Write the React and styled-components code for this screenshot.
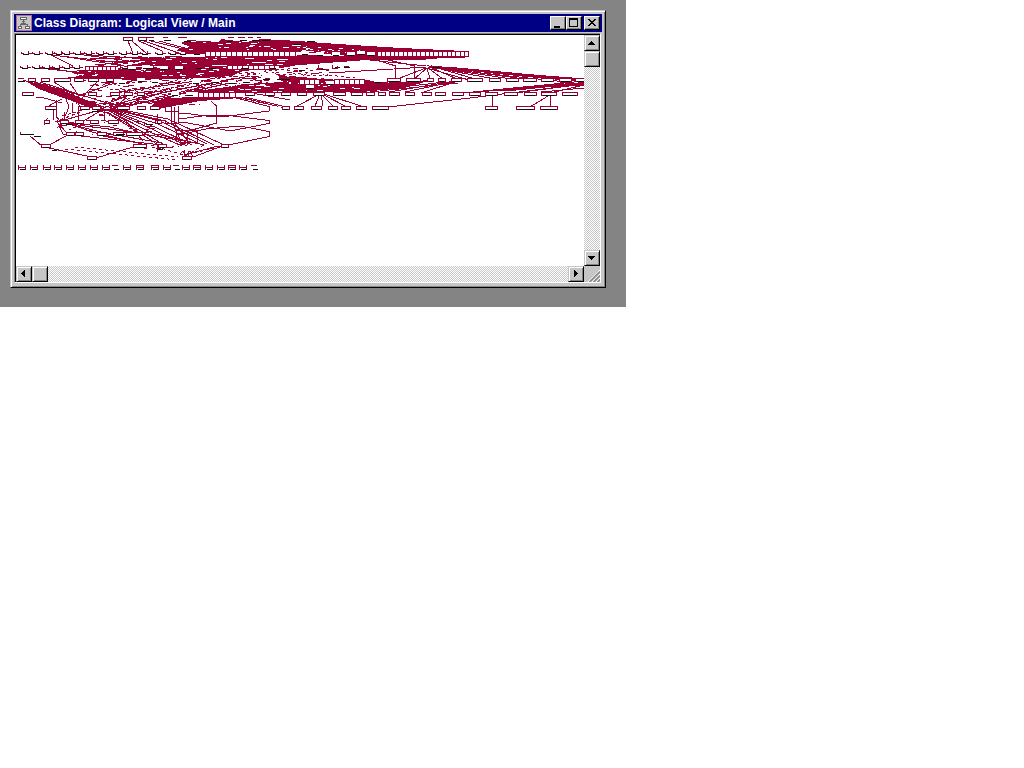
import React from "react";
import styled, { createGlobalStyle } from "styled-components";

const Global = createGlobalStyle`
  body { margin: 0; background: #fff; font-family: "Liberation Sans", Arial, sans-serif; }
`;
const Desktop = styled.main`
  box-sizing: border-box; width: 626px; height: 307px; padding: 10px;
  background: #848484;
`;
const Frame = styled.section`
  box-sizing: border-box; width: 596px; height: 278px; padding: 3px;
  background: #c6c6c6; border: 1px solid; border-color: #c6c6c6 #000 #000 #c6c6c6;
  box-shadow: inset 1px 1px #fff, inset -1px -1px #848484;
`;
const TitleBar = styled.header`
  box-sizing: border-box; display: flex; align-items: center;
  width: 588px; height: 18px; padding: 0 2px; background: #000084;
`;
const Title = styled.h1`
  flex: 1; margin: 0 0 0 2px; color: #fff; font-size: 12px; line-height: 17px;
  font-weight: 700; letter-spacing: 0.03px; white-space: nowrap;
`;
const Buttons = styled.div`display: flex;`;
const Button = styled.button`
  box-sizing: border-box; display: block; padding: 0;
  width: 16px; height: ${(p) => p.$h || 16}px; margin-left: ${(p) => p.$gap || 0}px;
  background: #c6c6c6; border: 1px solid; border-radius: 0;
  border-color: ${(p) => (p.$scroll ? "#c6c6c6 #000 #000 #c6c6c6" : "#fff #000 #000 #fff")};
  box-shadow: ${(p) => (p.$scroll ? "inset 1px 1px #fff, inset -1px -1px #848484" : "inset -1px -1px #848484")};
  svg { display: block; }
`;
const Client = styled.div`
  box-sizing: border-box; display: grid; width: 587px; height: 250px; margin-top: 1px;
  grid-template-columns: 568px 16px; grid-template-rows: 231px 16px;
  border: 1px solid; border-color: #848484 #fff #fff #848484;
  padding: 1px 0 0 1px; box-shadow: inset 1px 1px #000;
  svg { display: block; }
`;
const Track = styled.div`
  display: flex; flex-direction: ${(p) => (p.$vertical ? "column" : "row")};
  background: repeating-conic-gradient(#c6c6c6 0 25%, #fff 0 50%) 0 0 / 2px 2px;
`;
const Space = styled.div`flex: 1;`;
const Corner = styled.div`background: #c6c6c6;`;

const RED = "#990033";
const INK = "#111";

const arrows = {
  up: "M6 5h1v1H6zM5 6h3v1H5zM4 7h5v1H4zM3 8h7v1H3z",
  down: "M3 5h7v1H3zM4 6h5v1H4zM5 7h3v1H5zM6 8h1v1H6z",
  left: "M4 6h1v1H4zM5 5h1v3H5zM6 4h1v5H6zM7 3h1v7H7z",
  right: "M5 3h1v7H5zM6 4h1v5H6zM7 5h1v3H7zM8 6h1v1H8z",
};
const Arrow = ({ to }) => (
  <svg width="14" height="14" shapeRendering="crispEdges"><path d={arrows[to]} /></svg>
);
const captions = {
  Minimize: "M3 9h6v2H3z",
  Maximize: "M2 1h9v2H2zM2 3h1v7H2zM10 3h1v7h-1zM2 9h9v1H2z",
  Close: "M3 2h2v1H3zM9 2h2v1H9zM4 3h2v1H4zM8 3h2v1H8zM5 4h4v1H5zM6 5h2v1H6zM5 6h4v1H5zM4 7h2v1H4zM8 7h2v1H8zM3 8h2v1H3zM9 8h2v1H9z",
};
const Caption = ({ kind, gap }) => (
  <Button $h={14} $gap={gap} aria-label={kind}>
    <svg width="14" height="12" shapeRendering="crispEdges"><path d={captions[kind]} /></svg>
  </Button>
);
const DiagramIcon = () => (
  <svg width="16" height="16" shapeRendering="crispEdges">
    <path fill="#c6c6c6" stroke="#b06c91" d="M.5.5h15v15H.5z" />
    <path fill="#fff" stroke="#666" d="M4.5 2.5h6v2h-6zM2.5 11.5h3v2h-3zM9.5 11.5h4v2h-4z" />
    <path fill="none" stroke="#666" d="M7.5 5v4M4.5 11V9.5h7V11M5 8.5h5M6 6.5h3" />
  </svg>
);

/* Class nodes as [x, y, width] */
const nodes = [
  [123, 37, 9], [138, 37, 8],
  [28, 78, 7], [41, 78, 8], [54, 78, 16], [74, 78, 9], [88, 78, 10], [106, 78, 7],
  [22, 92, 11], [88, 92, 8], [110, 92, 9], [124, 92, 8], [137, 92, 7],
  [45, 106, 11], [80, 106, 9], [92, 106, 8], [117, 106, 12], [137, 106, 8], [150, 106, 9],
  [44, 120, 5], [60, 120, 8], [75, 120, 8], [90, 120, 8], [108, 120, 10], [155, 120, 6],
  [66, 132, 8], [75, 132, 8], [97, 132, 9], [113, 132, 10], [126, 132, 16],
  [41, 144, 9], [87, 156, 9], [182, 156, 9], [133, 144, 13], [158, 144, 8], [221, 144, 7],
  [282, 106, 7], [294, 106, 9], [311, 106, 10], [328, 106, 9], [341, 106, 9], [356, 106, 10], [372, 106, 16],
  [485, 106, 12], [516, 106, 18], [540, 106, 17],
  [245, 92, 9], [265, 92, 9], [281, 92, 9], [297, 92, 9], [313, 92, 11], [333, 92, 12], [351, 92, 11], [366, 92, 8], [378, 92, 7], [389, 92, 10], [405, 92, 9], [422, 92, 9], [435, 92, 10], [452, 92, 11], [469, 92, 11], [485, 92, 12], [504, 92, 13], [524, 92, 12], [541, 92, 15], [562, 92, 15],
  [387, 78, 13], [406, 78, 14], [427, 78, 6], [438, 78, 7], [451, 78, 10], [467, 78, 15], [489, 78, 11], [506, 78, 12], [523, 78, 13], [541, 78, 12], [559, 78, 12], [575, 78, 10],
];
const smallRows = [
  [51, [21, 32, 45, 54, 62, 73, 84, 96, 106, 119, 130, 140, 155, 168, 178, 192]],
  [65, [20, 32, 42, 52, 62, 72, 120, 146, 162, 177, 194]],
];
const insetBoxes = [
  [301, 51], [316, 52], [332, 52], [347, 52], [357, 51], [367, 52], [128, 66], [142, 65], [160, 66], [175, 66],
  [192, 80], [212, 79], [228, 80], [242, 79], [118, 80], [137, 78], [151, 79], [298, 67], [186, 92], [171, 92], [306, 85], [326, 81], [374, 79],
];
const baseRow = [18, 30, 43, 54, 66, 78, 90, 102, 112, 123, 136, 151, 163, 173, 193, 205, 217, 228, 239, 251, 182];

const masses = [
  "M181 43L188 40L218 42L221 39L246 42L262 39L280 40L300 41L310 42L353 45L401 48L465 51V58H435L375 58L300 52L191 54L175 50L190 47Z",
  "M136 58L174 56L190 57L300 55L378 57L443 58L420 60L367 60L300 65L202 65L184 67L150 66L124 66L146 62Z",
  "M76 70L105 69L144 69L190 65L233 66L280 63L310 63L281 68L243 71L232 76L202 78L149 80L94 79L66 78L86 75Z",
  "M24 80L35 83L64 91L84 99L96 105L105 109L91 108L72 101L58 96L39 89Z",
  "M156 101L165 98L198 97L240 98L200 101L158 109L151 107ZM190 91L220 88L244 84L284 82L363 84L432 80L404 88L360 92L278 93L206 93Z",
  "M270 72L282 75L301 77L331 79L365 80L393 83L324 87L288 87L282 81Z",
  "M431 66L451 67L506 72L549 76L584 79V82L527 77L479 72L434 68Z",
  "M480 91L534 86L584 82V86L550 87L511 91Z",
];

const links = `
M128 41L133 53M132 41L147 54M139 41L162 51M144 41L179 53M151 41L187 50M159 41L203 53
M49 54L73 66M51 55L123 63M61 56L161 72M76 54L137 62M88 55L165 60M38 68L96 74M48 68L108 78M90 59L150 57M100 62L160 60M95 65L150 60
M30 81L87 97M23 80L104 109M35 82L104 107M37 83L106 108M40 82L110 104
M36 97L44 98L62 103M43 83L53 90M70 83L79 96L76 104M54 82L73 94L80 107M99 80L87 92L79 102
M104 109L68 119L57 128M104 109L57 122L66 132M104 109L85 120M104 109L105 120M108 110L126 121L143 141
M105 109L150 132L182 146M107 109L152 129L187 146M108 109L155 127L192 145M110 109L158 124L200 144M112 109L160 121L207 144M114 109L165 121L214 145M118 109L168 119L222 144M107 112L146 134L164 145M106 112L146 137L160 146
M58 123L63 134L162 145M64 122L92 132L146 145M61 122L105 133L162 143M70 124L131 132L184 141M60 122L110 127L145 135
M49 145L66 136M49 148L87 156M140 143L98 135M96 158L133 147M30 136L42 146M157 134L204 145
M45 109L52 104L62 99M56 100V116L62 124M66 99L69 107L63 121M53 107V120M64 112V122M78 106V120M72 103V113
M105 107L155 94M110 109L165 92M113 110L160 98M103 105L130 95M78 96L111 84M110 107L190 97
M95 78L140 70M109 76L199 75M143 79L225 69M120 92L196 81M142 97L236 78M150 101L230 83M155 98L220 83M160 93L250 76M165 99L210 84M175 95L270 74
M171 105V123H178M174.5 107V124M178.5 106V124M211 101L216.5 106V123L178 134
M165 106V111H178M165 120V123H178M150 106H165
M236 98L269 106.5V111L229 116H206L183 113H178M178 118.5H183L206 115.5H229L269 120.5V123.5L230 131L183 122H178
M178 135L206 129L240 126L269 131.5V136.5L219 147
M173 124L182 144M175 124L187 140M187 130V145M196.5 130.5H176V142M197.5 131V142H182M218 146L188 154M225 145L193 157
M395.5 79V66L377 60M414.5 79V66L388 60M360 59L426 66M329 73L426 67M426 68L400 78M427 68L414 79M427 68L430 79M428 68L443 79M432 68L457 79M431 66L475 79
M431 66L584 80M432 67L584 79M434 68L566 82M434 67L525 79M430 69L469 80M430 67L495 79M430 67L512 79M455 81L389 92M455 82L421 93M457 81L405 92M458 83L360 93M445 82L350 93
M584 81L453 94M584 83L465 93M584 88L541 92M388 107L470 98L584 84M584 84L515 93M584 85L550 93M560 82L584 84
M320 94L297 106M320 94L315 106M321 94L323 106M321 94L333 106M322 94L347 107M324 94L364 107M492.5 96V106M550.5 96V106M548 96L530 107
M245 97L286 107M231 95L276 106M252 93L290 100M210 96L238 88M185 96L203 84`;
const dashed = `
M65 149L178 160M75 147L178 157M151 145L183 155M226 145L190 154M204 145L183 157
M55 122L80 112M62 116L93 107M88 107L137 93M134 97L226 77M110 105L153 91M112 99L180 79
M148 93L230 75M119 93L212 75M167 97L241 78M202 81L240 72M211 79L275 72M221 75L299 68
M77 80L120 84M90 86L169 80M110 90L160 88M216 82L269 77M247 73L330 76M275 69L355 78M298 79L384 88M216 93L286 108`;

const pixels = [];
let seed = 739;
const rand = () => {
  seed = (seed * 1664525 + 1013904223) >>> 0;
  return seed / 4294967296;
};
const scatter = (x, y, w, h, n, color) => {
  for (let i = 0; i < n; i++) {
    pixels.push([Math.floor(x + rand() * w), Math.floor(y + rand() * h), 1 + Math.floor(rand() * 6), color]);
  }
};
scatter(187, 41, 125, 9, 26, "#fff");
scatter(300, 46, 60, 8, 20, "#fff");
scatter(140, 57, 150, 8, 28, "#fff");
scatter(85, 69, 100, 10, 24, "#fff");
scatter(195, 64, 85, 13, 30, "#fff");
scatter(190, 84, 90, 8, 25, "#fff");
scatter(285, 74, 75, 18, 35, "#fff");
scatter(90, 56, 60, 13, 40, RED);
scatter(60, 72, 40, 8, 12, RED);
scatter(90, 80, 110, 25, 130, RED);
scatter(195, 76, 80, 10, 50, RED);
scatter(275, 67, 55, 8, 22, RED);
scatter(96, 103, 30, 14, 35, RED);
scatter(60, 120, 90, 15, 35, RED);
scatter(133, 143, 50, 6, 14, RED);

const Box = ({ x, y, w }) => (
  <>
    <path fill="#fff" d={`M${x} ${y}h${w + 1}v4h${-w - 1}z`} />
    <path stroke={RED} d={`M${x + 0.5} ${y + 0.5}h${w}v3h${-w}z`} />
    <path stroke={INK} d={`M${x + 2} ${y + 3.5}h${Math.max(3, w - 3)}`} />
  </>
);
const Inset = ({ x, y }) => (
  <>
    <path fill="#fff" d={`M${x} ${y}h8v3h-1v1h-6v-1h-1z`} />
    <path stroke={INK} d={`M${x + 1} ${y + 3.5}h6`} />
  </>
);
const Bracket = ({ x, y }) => (
  <>
    <path stroke={RED} d={`M${x + 3} ${y + 2.5}h-2.5v-2M${x + 7.5} ${y}v2.5h3`} />
    <path stroke={INK} d={`M${x + 2} ${y + 3.5}h6`} />
  </>
);
const Cells = ({ from, to, y, h = 4, step = 5 }) => {
  let d = `M${from} ${y + 0.5}H${to}M${from} ${y + h + 0.5}H${to}`;
  for (let x = from; x <= to + 0.5; x += step) d += `M${Math.floor(x) + 0.5} ${y}v${h + 1}`;
  return (
    <>
      <path fill="#fff" d={`M${from} ${y}H${to}v${h}H${from}z`} />
      <path stroke={RED} d={d} />
    </>
  );
};

const Diagram = () => (
  <svg width="568" height="231" viewBox="16 35 568 231" fill="none" shapeRendering="crispEdges" role="img" aria-label="Class diagram">
    <path fill="#fff" d="M16 35h568v231H16z" />
    <path stroke={RED} d={links} />
    <path stroke={RED} strokeDasharray="3 3" d={dashed} />
    {masses.map((d) => <path key={d} fill={RED} d={d} />)}
    {pixels.map(([x, y, w, c], i) => <path key={i} fill={c} d={`M${x} ${y}h${w}v1h${-w}z`} />)}
    <Cells from={205} to={297} y={51} h={5} step={5.3} />
    <Cells from={377} to={469} y={51} h={5} step={4.38} />
    <Cells from={85} to={118} y={66} h={4} step={4.3} />
    <Cells from={227} to={279} y={65} h={4} step={5.3} />
    <Cells from={198} to={239} y={92} h={5} step={5.3} />
    <Cells from={299} to={319} y={79} h={5} />
    <Cells from={334} to={365} y={79} h={5} />
    <path fill="#fff" d="M261 76l5-3h8l5 3v2h-18z" />
    <path stroke={RED} d="M147 37.5h7M163 37.5h5M178 37.5h9M228 37.5h6M238 37.5h7M248 37.5h5M257 37.5h4" />
    <path stroke={INK} d="M149 40.5h5M164 40.5h7M184 41.5h7M227 41.5h5M240 40.5h7M252 40.5h8M262 40.5h8M293 44.5h9M307 41.5h8M209 68.5h7M241 68.5h8M270 68.5h6M318 69.5h7M335 67.5h5M344 67.5h6M263 79.5h7M277 79.5h13M432 67.5h8" />
    <path stroke={RED} d="M318 64.5v5h3M332.5 65v3h5v-2M344 66.5h5M427 65l7 4M427 69l5-4" />
    {smallRows.map(([y, xs]) => xs.map((x) => <Bracket key={`${x}-${y}`} x={x} y={y} />))}
    {insetBoxes.map(([x, y]) => <Inset key={`${x}-${y}`} x={x} y={y} />)}
    {nodes.map(([x, y, w]) => <Box key={`${x}-${y}`} x={x} y={y} w={w} />)}
    <path stroke={INK} d="M18 81.5h7M20 134.5h14M34 136.5h7M52 150.5h5M92 111.5h8M66 124.5h7M146 124.5h7M116 134.5h9M158 149.5h5" />
    <path stroke={RED} d="M18 78.5h6M20.5 132v3M180 154l3-3 3 5 4-5 3 6M48 118l-4 4v3M184.5 150v7M188.5 151v5M157.5 145v7M157.5 114v9" />
    {baseRow.map((x, i) => (
      <React.Fragment key={x}>
        {i === 8 || i === 19 || i === 13
          ? <path stroke={RED} d={`M${x} 165.5h6`} />
          : <path stroke={RED} d={`M${x + 0.5} 165v5M${x + 7.5} 165v5M${x} 167.5h7`} />}
        <path stroke={INK} d={`M${x + 2} 169.5h5`} />
        {[10, 11, 14, 17].includes(i) && <path stroke={RED} d={`M${x} 165.5h8`} />}
      </React.Fragment>
    ))}
  </svg>
);

export default function App() {
  return (
    <>
      <Global />
      <Desktop>
        <Frame>
          <TitleBar>
            <DiagramIcon />
            <Title>Class Diagram: Logical View / Main</Title>
            <Buttons>
              <Caption kind="Minimize" />
              <Caption kind="Maximize" />
              <Caption kind="Close" gap={2} />
            </Buttons>
          </TitleBar>
          <Client>
            <Diagram />
            <Track $vertical>
              <Button $scroll aria-label="Scroll up"><Arrow to="up" /></Button>
              <Button $scroll aria-label="Vertical thumb" />
              <Space />
              <Button $scroll aria-label="Scroll down"><Arrow to="down" /></Button>
            </Track>
            <Track>
              <Button $scroll aria-label="Scroll left"><Arrow to="left" /></Button>
              <Button $scroll aria-label="Horizontal thumb" />
              <Space />
              <Button $scroll aria-label="Scroll right"><Arrow to="right" /></Button>
            </Track>
            <Corner>
              <svg width="16" height="16">
                <path stroke="#fff" d="M4 16L16 4M8 16l8-8M12 16l4-4" />
                <path stroke="#848484" strokeWidth="1.5" d="M5.5 16L16 5.5M9.5 16l6.5-6.5M13.5 16l2.5-2.5" />
              </svg>
            </Corner>
          </Client>
        </Frame>
      </Desktop>
    </>
  );
}
